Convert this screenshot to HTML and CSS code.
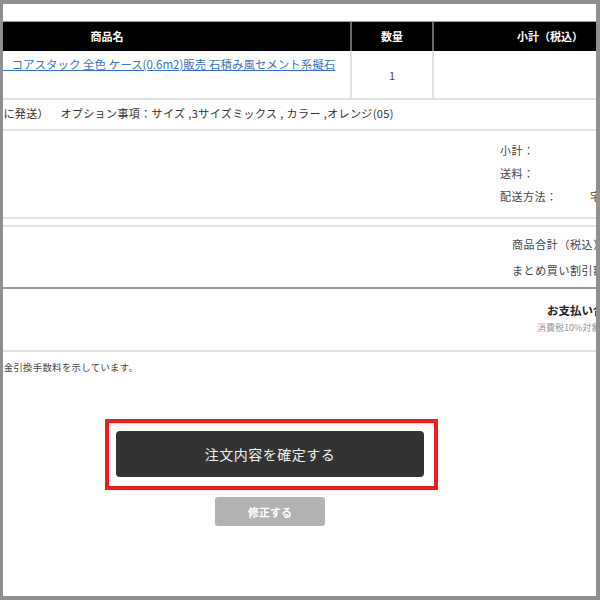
FILE: index.html
```html
<!DOCTYPE html>
<html lang="ja">
<head>
<meta charset="utf-8">
<title>注文内容の確認</title>
<link rel="stylesheet" href="styles.css">
</head>
<body>
<div class="frame">
  <div class="sheet">
    <div class="thead">
      <div class="th">商品名</div>
      <div class="th">数量</div>
      <div class="th">小計（税込）</div>
    </div>
    <div class="trow">
      <div class="td td-name"><a class="item-link" href="#">&#x2003;コアスタック 全色 ケース(0.6m2)販売 石積み風セメント系擬石</a></div>
      <div class="td td-qty">1</div>
      <div class="td"></div>
    </div>
    <div class="option-row">日に発送）&#x2003;オプション事項：サイズ ,3サイズミックス , カラー ,オレンジ(05)</div>
    <div class="sum-block sum-ship">
      <div class="sum-label">小計：</div><div class="sum-value"></div>
      <div class="sum-label">送料：</div><div class="sum-value"></div>
      <div class="sum-label">配送方法：</div><div class="sum-value">宅配便</div>
    </div>
    <div class="sum-block sum-goods">
      <div class="sum-label">商品合計（税込）</div>
      <div class="sum-label">まとめ買い割引額</div>
    </div>
    <div class="sum-block sum-total">
      <div class="total-title">お支払い合計</div>
      <div class="total-note">消費税10%対象</div>
    </div>
    <div class="note">代金引換手数料を示しています。</div>
  </div>
  <div class="actions">
    <div class="highlight">
      <button class="btn-confirm" type="button">注文内容を確定する</button>
    </div>
    <button class="btn-edit" type="button">修正する</button>
  </div>
</div>
</body>
</html>
```

FILE: styles.css
```css
* { box-sizing: border-box; }
html, body { margin: 0; padding: 0; background: #fff; }
body {
  font-family: "Noto Sans CJK JP", "Noto Sans", sans-serif;
  color: #333;
}
.frame {
  width: 600px;
  height: 600px;
  border-style: solid;
  border-color: #8f8f8f;
  border-width: 4px 4px 4px 3px;
  overflow: hidden;
  background: #fff;
}
.sheet {
  width: 802px;
  margin-left: -139px;
  padding-top: 17px;
}
.thead {
  display: grid;
  grid-template-columns: 486px 80px 232px;
  column-gap: 2px;
  background: #666;
  border-top: 1px solid #a0a0a0;
}
.th {
  background: #000;
  color: #fff;
  font-size: 11px;
  font-weight: bold;
  height: 29px;
  line-height: 29px;
  text-align: center;
}
.trow {
  display: grid;
  grid-template-columns: 486px 80px 232px;
  column-gap: 2px;
  background: #e2e2e2;
  border-bottom: 2px solid #e2e2e2;
}
.td {
  background: #fff;
  height: 47px;
  font-size: 11px;
}
.td-name {
  padding: 5px 0 0 136px;
  line-height: 16px;
  font-size: 11.5px;
}
.item-link {
  color: #3a74c4;
  text-decoration: underline;
}
.td-qty {
  display: flex;
  align-items: center;
  justify-content: center;
  font-size: 11px;
  color: #444;
}
.option-row {
  height: 31px;
  line-height: 26px;
  padding-left: 128px;
  font-size: 11px;
  letter-spacing: 0.4px;
  white-space: nowrap;
  border-bottom: 2px solid #e2e2e2;
}
.sum-block {
  font-size: 11px;
  color: #444;
}
.sum-ship {
  display: grid;
  grid-template-columns: 90px 76px;
  grid-auto-rows: 23px;
  align-items: center;
  height: 88px;
  padding: 7px 0 0 636px;
  border-bottom: 2px solid #e2e2e2;
  margin-bottom: 6px;
  letter-spacing: 0.5px;
}
.sum-value { white-space: nowrap; }
.sum-goods {
  height: 64px;
  padding: 4px 0 0 648px;
  border-top: 2px solid #e2e2e2;
  border-bottom: 2px solid #999;
  line-height: 26px;
  letter-spacing: 0.6px;
}
.sum-total {
  height: 63px;
  padding-top: 12px;
  border-bottom: 2px solid #e2e2e2;
}
.total-title {
  padding-left: 683px;
  font-size: 11.5px;
  font-weight: bold;
  color: #222;
  line-height: 18px;
  white-space: nowrap;
}
.total-note {
  padding-left: 673px;
  font-size: 9px;
  color: #999;
  line-height: 18px;
  white-space: nowrap;
}
.note {
  padding: 8px 0 0 130px;
  font-size: 9.3px;
  letter-spacing: 0.4px;
  line-height: 14px;
  color: #444;
}
.actions {
  width: 534px;
  margin-top: 45px;
  display: flex;
  flex-direction: column;
  align-items: center;
}
.highlight {
  width: 333px;
  height: 71px;
  margin-left: 3px;
  border: 4px solid #f21b1b;
  padding: 8px 10px 9px 7px;
}
.btn-confirm {
  display: block;
  width: 308px;
  height: 46px;
  border: none;
  border-radius: 4px;
  background: #333;
  color: #f0f0f0;
  font-family: "Noto Sans CJK JP", "Noto Sans", sans-serif;
  font-size: 14px;
  letter-spacing: 0.5px;
}
.btn-edit {
  margin-top: 7px;
  width: 110px;
  height: 29px;
  border: none;
  border-radius: 3px;
  background: #b2b2b2;
  color: #fff;
  font-family: "Noto Sans CJK JP", "Noto Sans", sans-serif;
  font-size: 11px;
  font-weight: bold;
}
```
